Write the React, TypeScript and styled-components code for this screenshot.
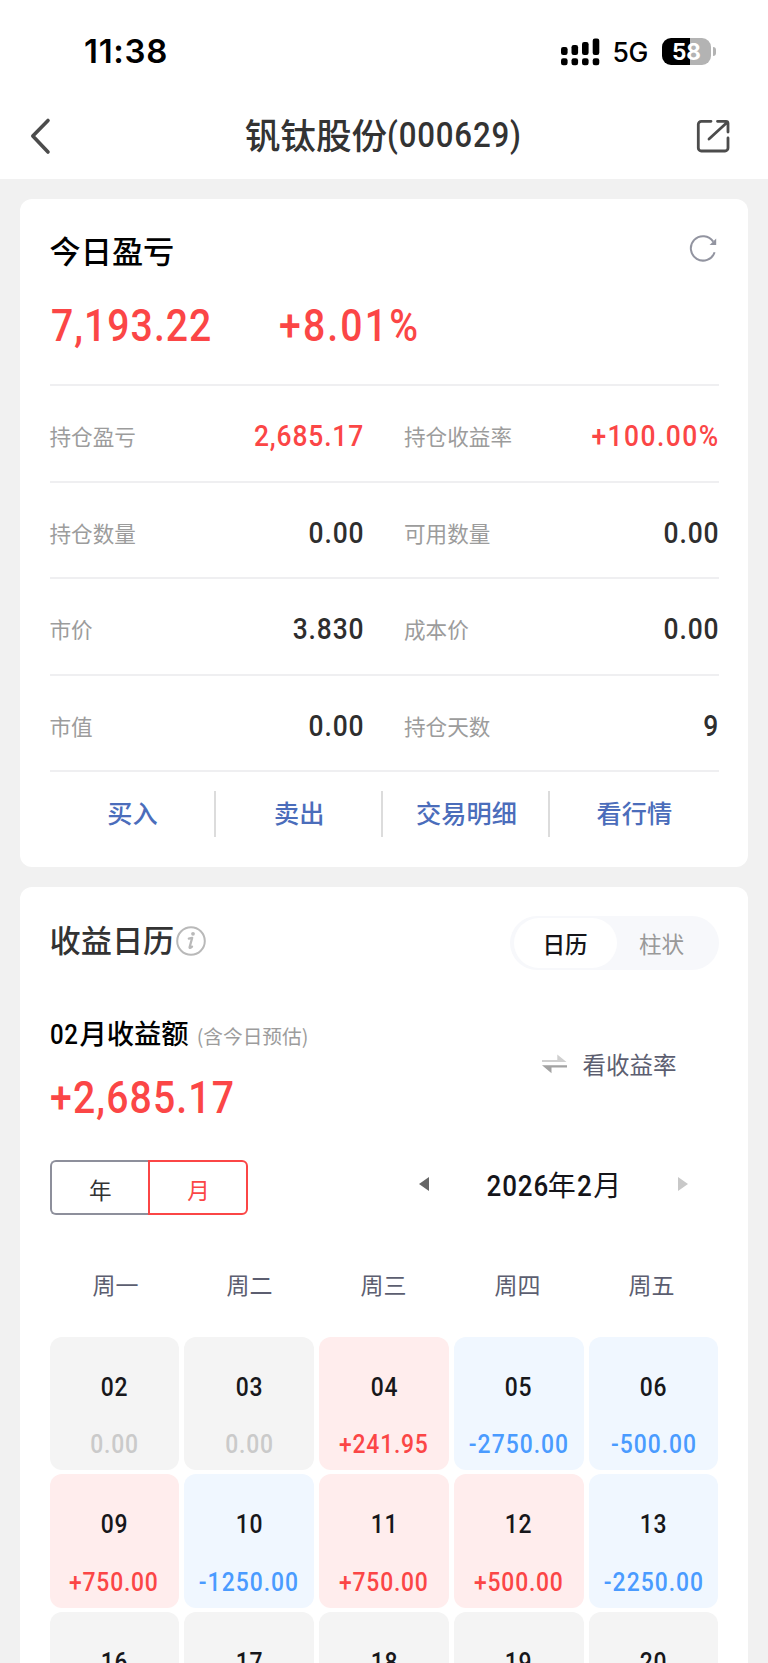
import React from "react";
import styled, { createGlobalStyle } from "styled-components";

const RED = "#fb4646";
const BLUE = "#4a9bff";
const SLATE = "#5c5e70";

const GlobalStyle = createGlobalStyle`
  * { box-sizing: border-box; }
  html, body { margin: 0; padding: 0; background: #f1f1f1; }
  body { font-family: "Noto Sans CJK SC", sans-serif; -webkit-font-smoothing: antialiased; }
`;

const Screen = styled.div`
  width: 768px;
  height: 1663px;
  overflow: hidden;
  background: #f1f1f1;
`;

const TopArea = styled.header`
  height: 179px;
  background: #fff;
`;

const StatusBar = styled.div`
  height: 94px;
  padding: 8px 52px 0 84px;
  display: flex;
  align-items: center;
  justify-content: space-between;
`;

const Clock = styled.span`
  font: 600 33px/40px Inter, sans-serif;
  color: #000;
  letter-spacing: 0.7px;
`;

const StatusRight = styled.div`
  padding-top: 1px;
  display: flex;
  align-items: center;
`;

const Network = styled.span`
  font: 500 26.5px/34px Inter, sans-serif;
  letter-spacing: -0.3px;
  color: #000;
  margin: 1px 14px 0 12px;
`;

const Battery = styled.div`
  width: 49px;
  height: 27px;
  border-radius: 9px;
  background: linear-gradient(90deg, #000 0 28px, #b3b3b3 28px);
  color: #fff;
  text-align: center;
  font: 700 22.5px/28px Inter, sans-serif;
`;

const BatteryTip = styled.div`
  width: 3px;
  height: 9px;
  margin-left: 2px;
  border-radius: 0 5px 5px 0;
  background: #b3b3b3;
`;

const NavBar = styled.div`
  height: 85px;
  padding: 0 38px 2px 29px;
  display: flex;
  align-items: center;
  justify-content: space-between;
`;

const Title = styled.h1`
  margin: 0 0 0 36px;
  display: flex;
  align-items: center;
  font-size: 35.6px;
  font-weight: 500;
  line-height: 48px;
  color: #333;
`;

const TitleName = styled.span`
  margin-top: -3px;
`;

const Num = styled.span<{ $size: number; $origin?: string; $color?: string; $track?: number }>`
  display: inline-block;
  font-family: Roboto, "Noto Sans CJK SC", sans-serif;
  font-size: ${(p) => p.$size}px;
  font-weight: 500;
  letter-spacing: ${(p) => p.$track ?? 0.026}em;
  margin-right: ${(p) => (p.$origin === "right" ? -(p.$track ?? 0.026) : 0)}em;
  line-height: 1.2;
  color: ${(p) => p.$color ?? "inherit"};
  transform: scaleX(0.88);
  transform-origin: ${(p) => p.$origin ?? "center"} center;
  white-space: nowrap;
`;

const Card = styled.section<{ $height: number }>`
  height: ${(p) => p.$height}px;
  margin: 20px 20px 0;
  padding: 0 29.5px;
  border-radius: 12px;
  background: #fff;
`;

const CardHead = styled.div`
  height: 101px;
  padding-right: 1px;
  display: flex;
  align-items: center;
  justify-content: space-between;

  svg { margin-bottom: 3px; }
`;

const CardTitle = styled.h2<{ $color: string }>`
  margin: 0;
  font-size: 31.2px;
  line-height: 44px;
  font-weight: 500;
  color: ${(p) => p.$color};
`;

const Headline = styled.div`
  height: 84px;
  padding-left: 1px;
  display: flex;
  gap: 45px;
  align-items: flex-start;
  color: ${RED};
`;

const MetricRow = styled.div`
  height: 96.5px;
  padding-top: 6px;
  border-top: 2px solid #efeff1;
  display: grid;
  grid-template-columns: 314px 314px;
  column-gap: 40.5px;
`;

const Metric = styled.div`
  display: flex;
  align-items: center;
  justify-content: space-between;
`;

const MetricLabel = styled.span`
  font-size: 21.6px;
  line-height: 30px;
  font-weight: 400;
  color: #9c9c9c;
`;

const Actions = styled.nav`
  height: 96px;
  padding-top: 19px;
  border-top: 2px solid #efeff1;
  display: grid;
  grid-template-columns: 166px 167.3px 167.3px 1fr;
`;

const Action = styled.a`
  height: 46px;
  border-right: 2px solid #dcdcdc;
  text-align: center;
  text-indent: 2px;
  font-size: 25.2px;
  line-height: 43px;
  font-weight: 500;
  color: #4b6dbb;
  &:last-child { border-right-color: transparent; }
`;

const CalendarHead = styled.div`
  height: 108px;
  display: flex;
  align-items: center;
  justify-content: space-between;
`;

const TitleGroup = styled.div`
  display: flex;
  align-items: center;
  padding-bottom: 4px;
  gap: 2px;

  svg { margin-top: 4px; }
`;

const Segmented = styled.div`
  width: 209px;
  height: 54px;
  margin-top: 5px;
  padding: 2px 4px;
  display: flex;
  border-radius: 27px;
  background: #f7f8fb;
`;

const Segment = styled.span<{ $active?: boolean }>`
  width: ${(p) => (p.$active ? 103 : 90)}px;
  height: 50px;
  border-radius: 25px;
  text-align: center;
  font-size: 22.6px;
  line-height: 51px;
  background: ${(p) => (p.$active ? "#fff" : "transparent")};
  color: ${(p) => (p.$active ? "#15151a" : "#999")};
  font-weight: ${(p) => (p.$active ? 500 : 400)};
`;

const Summary = styled.div`
  height: 165px;
  display: flex;
  justify-content: space-between;
`;

const SummaryLabel = styled.div`
  padding-top: 17px;
  height: 77px;
  display: flex;
  align-items: baseline;
  font-size: 27.3px;
  line-height: 40px;
  font-weight: 500;
  color: #000;
`;

const MonthName = styled.span`
  margin-left: -2.5px;
`;

const Hint = styled.span`
  margin-left: 8px;
  font-size: 19.7px;
  font-weight: 400;
  color: #9c9c9c;
`;

const RateLink = styled.div`
  height: 34px;
  margin: 52px 42px 0 0;
  display: flex;
  align-items: center;
  gap: 14.5px;
  font-size: 23.5px;
  line-height: 34px;
  color: ${SLATE};
`;

const PeriodRow = styled.div`
  height: 55px;
  display: flex;
  justify-content: space-between;
`;

const Periods = styled.div`
  display: flex;
`;

const Period = styled.span<{ $active?: boolean }>`
  width: ${(p) => (p.$active ? 100 : 98.5)}px;
  height: 55px;
  border: 2px solid ${(p) => (p.$active ? RED : "#8d8f9b")};
  border-right-width: ${(p) => (p.$active ? 2 : 0)}px;
  border-radius: ${(p) => (p.$active ? "0 6px 6px 0" : "6px 0 0 6px")};
  text-align: center;
  font-size: 22.6px;
  line-height: 56px;
  text-indent: 1px;
  color: ${(p) => (p.$active ? RED : "#333")};
`;

const MonthNav = styled.div`
  width: 269px;
  height: 49px;
  margin-right: 30.5px;
  display: flex;
  align-items: center;
  justify-content: space-between;
`;

const MonthText = styled.div`
  margin-right: 8px;
  display: flex;
  align-items: baseline;
  font-size: 28px;
  line-height: 40px;
  color: #15151a;
`;

const Weekdays = styled.div`
  height: 122px;
  padding-top: 52px;
  margin-left: -1px;
  display: grid;
  grid-template-columns: repeat(5, 1fr);
  text-align: center;
  font-size: 23px;
  line-height: 34px;
  color: ${SLATE};
`;

const Days = styled.div`
  display: grid;
  grid-template-columns: repeat(5, 1fr);
  gap: 4.3px 5.6px;
`;

const tones = {
  flat: { bg: "#f4f4f4", fg: "#cacaca" },
  up: { bg: "#ffeded", fg: RED },
  down: { bg: "#f0f7ff", fg: BLUE },
};
type Tone = keyof typeof tones;

const Day = styled.div<{ $tone: Tone }>`
  height: 133.7px;
  padding-top: 35px;
  border-radius: 12px;
  display: flex;
  flex-direction: column;
  align-items: center;
  gap: 26px;
  color: #17171b;
  background: ${(p) => tones[p.$tone].bg};
`;

const metrics: [string, string, boolean?][][] = [
  [["持仓盈亏", "2,685.17", true], ["持仓收益率", "+100.00%", true]],
  [["持仓数量", "0.00"], ["可用数量", "0.00"]],
  [["市价", "3.830"], ["成本价", "0.00"]],
  [["市值", "0.00"], ["持仓天数", "9"]],
];

const days: [string, string, Tone][] = [
  ["02", "0.00", "flat"], ["03", "0.00", "flat"], ["04", "+241.95", "up"], ["05", "-2750.00", "down"], ["06", "-500.00", "down"],
  ["09", "+750.00", "up"], ["10", "-1250.00", "down"], ["11", "+750.00", "up"], ["12", "+500.00", "up"], ["13", "-2250.00", "down"],
  ["16", "", "flat"], ["17", "", "flat"], ["18", "", "flat"], ["19", "", "flat"], ["20", "", "flat"],
];

const SignalIcon = () => (
  <svg width="39" height="28" viewBox="0 0 39 28">
    {[[0, 9], [10.5, 7], [21, 4], [31.7, 0.5]].map(([x, y]) => (
      <g key={x}>
        <rect x={x} y={y} width="6.6" height={17 - y} rx="2.2" />
        <rect x={x} y="20.3" width="6.6" height="7" rx="2.2" />
      </g>
    ))}
  </svg>
);

const BackIcon = () => (
  <svg width="24" height="38" viewBox="0 0 24 38" fill="none" stroke="#4c4c4c" strokeWidth="3.6" strokeLinecap="round" strokeLinejoin="round">
    <path d="M19 3.5 3.8 19 19 35" />
  </svg>
);

const ShareIcon = () => (
  <svg width="34" height="34" viewBox="0 0 34 34" fill="none" stroke="#4c4c4c" strokeWidth="2.8" strokeLinecap="round" strokeLinejoin="round">
    <path d="M15 2.3H5.3a3 3 0 0 0-3 3V29a3 3 0 0 0 3 3H29a3 3 0 0 0 3-3V19" />
    <path d="M21.5 2.3H30a2 2 0 0 1 2 2V13M31 3.5 13 20" />
  </svg>
);

const RefreshIcon = () => (
  <svg width="30" height="30" viewBox="0 0 30 30" fill="none">
    <path d="M26.6 19.3A12.2 12.2 0 1 1 25.2 8.6" stroke="#9294a0" strokeWidth="2" />
    <path d="M28.2 5.4v6.6h-6.6z" fill="#9294a0" />
  </svg>
);

const InfoIcon = () => (
  <svg width="30" height="30" viewBox="0 0 30 30" fill="none" stroke="#b9b9b9">
    <circle cx="15" cy="15" r="13.8" strokeWidth="2" />
    <path d="M12.8 12.6l3.4-.8-2.6 9.4c-.2 1 .8 1 2.4-.6" strokeWidth="2.3" strokeLinecap="round" strokeLinejoin="round" />
    <circle cx="17" cy="7.8" r="1.9" fill="#b9b9b9" stroke="none" />
  </svg>
);

const SwapIcon = () => (
  <svg width="26" height="20" viewBox="0 0 26 20">
    <path d="M0 6h15.3V.5L24.5 8H0z" fill="#cfcfcf" />
    <path d="M0 11.3h25v2.3H9.5v5.7z" fill="#a3a3a3" />
  </svg>
);

const Arrow = ({ next }: { next?: boolean }) => (
  <svg width="10" height="14" viewBox="0 0 10 14">
    <path d={next ? "M0 0v14l10-7z" : "M10 0v14L0 7z"} fill={next ? "#c8c8c8" : "#666"} />
  </svg>
);

const amountTrack = (amount: string) => (amount.startsWith("-") ? 0.044 : 0.034);

export default function App() {
  return (
    <Screen>
      <GlobalStyle />
      <TopArea>
        <StatusBar>
          <Clock>11:38</Clock>
          <StatusRight>
            <SignalIcon />
            <Network>5G</Network>
            <Battery>58</Battery>
            <BatteryTip />
          </StatusRight>
        </StatusBar>
        <NavBar>
          <BackIcon />
          <Title>
            <TitleName>钒钛股份</TitleName>
            <Num $size={35.5} $origin="left">(000629)</Num>
          </Title>
          <ShareIcon />
        </NavBar>
      </TopArea>

      <Card $height={667.5}>
        <CardHead>
          <CardTitle $color="#000">今日盈亏</CardTitle>
          <RefreshIcon />
        </CardHead>
        <Headline>
          <Num $size={44.5} $origin="left">7,193.22</Num>
          <Num $size={44.5} $origin="left" $track={0.055}>+8.01%</Num>
        </Headline>
        {metrics.map((row) => (
          <MetricRow key={row[0][0]}>
            {row.map(([label, value, hot]) => (
              <Metric key={label}>
                <MetricLabel>{label}</MetricLabel>
                <Num $size={30} $origin="right" $track={value.endsWith("%") ? 0.055 : 0.032} $color={hot ? RED : "#2e2e2e"}>
                  {value}
                </Num>
              </Metric>
            ))}
          </MetricRow>
        ))}
        <Actions>
          <Action>买入</Action>
          <Action>卖出</Action>
          <Action>交易明细</Action>
          <Action>看行情</Action>
        </Actions>
      </Card>

      <Card $height={800}>
        <CalendarHead>
          <TitleGroup>
            <CardTitle $color="#333">收益日历</CardTitle>
            <InfoIcon />
          </TitleGroup>
          <Segmented>
            <Segment $active>日历</Segment>
            <Segment>柱状</Segment>
          </Segmented>
        </CalendarHead>
        <Summary>
          <div>
            <SummaryLabel>
              <Num $size={27.3} $origin="left">02</Num>
              <MonthName>月收益额</MonthName>
              <Hint>(含今日预估)</Hint>
            </SummaryLabel>
            <Num $size={44.5} $origin="left" $color={RED} $track={0.029}>+2,685.17</Num>
          </div>
          <RateLink>
            <SwapIcon />
            看收益率
          </RateLink>
        </Summary>
        <PeriodRow>
          <Periods>
            <Period>年</Period>
            <Period $active>月</Period>
          </Periods>
          <MonthNav>
            <Arrow />
            <MonthText>
              <Num $size={29.5} $origin="right" $track={0.035}>2026</Num>年<Num $size={29.5}>2</Num>月
            </MonthText>
            <Arrow next />
          </MonthNav>
        </PeriodRow>
        <Weekdays>
          {["周一", "周二", "周三", "周四", "周五"].map((d) => (
            <span key={d}>{d}</span>
          ))}
        </Weekdays>
        <Days>
          {days.map(([date, amount, tone]) => (
            <Day key={date} $tone={tone}>
              <Num $size={26}>{date}</Num>
              {amount && (
                <Num $size={26} $track={amountTrack(amount)} $color={tones[tone].fg}>{amount}</Num>
              )}
            </Day>
          ))}
        </Days>
      </Card>
    </Screen>
  );
}
